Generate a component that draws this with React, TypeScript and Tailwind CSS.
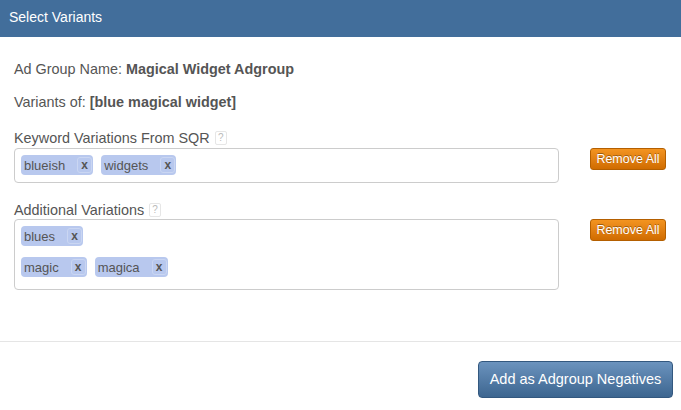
import React from "react";

const font = { fontFamily: '"Liberation Sans", Arial, sans-serif' };

function Tag({ label }: { label: string }) {
  return (
    <span className="inline-flex h-[20px] items-center rounded-[4px] bg-[#b8c8ee] pl-[3px] pr-[1px] text-[13px] leading-none text-[#555555]">
      <span>{label}</span>
      <span className="ml-[12px] flex h-[16px] w-[15px] items-center justify-center rounded-[3px] border border-[#cad6f2] text-[12px] font-bold text-[#555555]">
        x
      </span>
    </span>
  );
}

function Help() {
  return (
    <span className="ml-[5px] inline-flex h-[14px] w-[12px] items-center justify-center rounded-[2px] border border-[#e6e6e6] text-[10px] leading-none text-[#bbbbbb]">
      ?
    </span>
  );
}

function RemoveAll() {
  return (
    <button className="block h-[22px] w-[76px] rounded-[3px] border border-[#b45f00] bg-gradient-to-b from-[#f39420] to-[#d06c00] text-[12.5px] leading-none text-white [text-shadow:0_-1px_0_rgba(0,0,0,0.35)]">
      Remove All
    </button>
  );
}

export default function App() {
  return (
    <div className="h-[410px] w-[681px] bg-white text-[#555555]" style={font}>
      <div className="flex h-[37px] items-center bg-[#426e9b] pl-[9px] pb-[2px] text-[14px] text-white">
        Select Variants
      </div>
      <div className="px-[14px]">
        <div className="mt-[22px] text-[14.4px] leading-[20px]">
          Ad Group Name: <span className="font-bold">Magical Widget Adgroup</span>
        </div>
        <div className="mt-[13px] text-[14.4px] leading-[20px]">
          Variants of: <span className="font-bold">[blue magical widget]</span>
        </div>

        <div className="mt-[16px] flex h-[20px] items-center text-[14.4px] leading-[20px]">
          Keyword Variations From SQR
          <Help />
        </div>
        <div className="flex items-start gap-[31px]">
          <div className="flex h-[35px] w-[545px] flex-wrap gap-[8px] rounded-[4px] border border-[#cccccc] px-[6px] pt-[6px]">
            <Tag label="blueish" />
            <Tag label="widgets" />
          </div>
          <RemoveAll />
        </div>

        <div className="mt-[17px] flex h-[19px] items-center text-[14.4px] leading-[20px]">
          Additional Variations
          <Help />
        </div>
        <div className="flex items-start gap-[31px]">
          <div className="flex h-[71px] w-[545px] flex-col gap-[11px] rounded-[4px] border border-[#cccccc] px-[6px] pt-[6px]">
            <div className="flex gap-[8px]">
              <Tag label="blues" />
            </div>
            <div className="flex gap-[8px]">
              <Tag label="magic" />
              <Tag label="magica" />
            </div>
          </div>
          <RemoveAll />
        </div>
      </div>

      <div className="mt-[51px] h-px w-full bg-[#e5e5e5]" />

      <div className="flex justify-end pr-[8px] pt-[19px]">
        <button className="h-[37px] w-[195px] rounded-[4px] border border-[#33587f] bg-gradient-to-b from-[#6b93be] to-[#3d6690] text-[14.5px] leading-none text-white">
          Add as Adgroup Negatives
        </button>
      </div>
    </div>
  );
}
